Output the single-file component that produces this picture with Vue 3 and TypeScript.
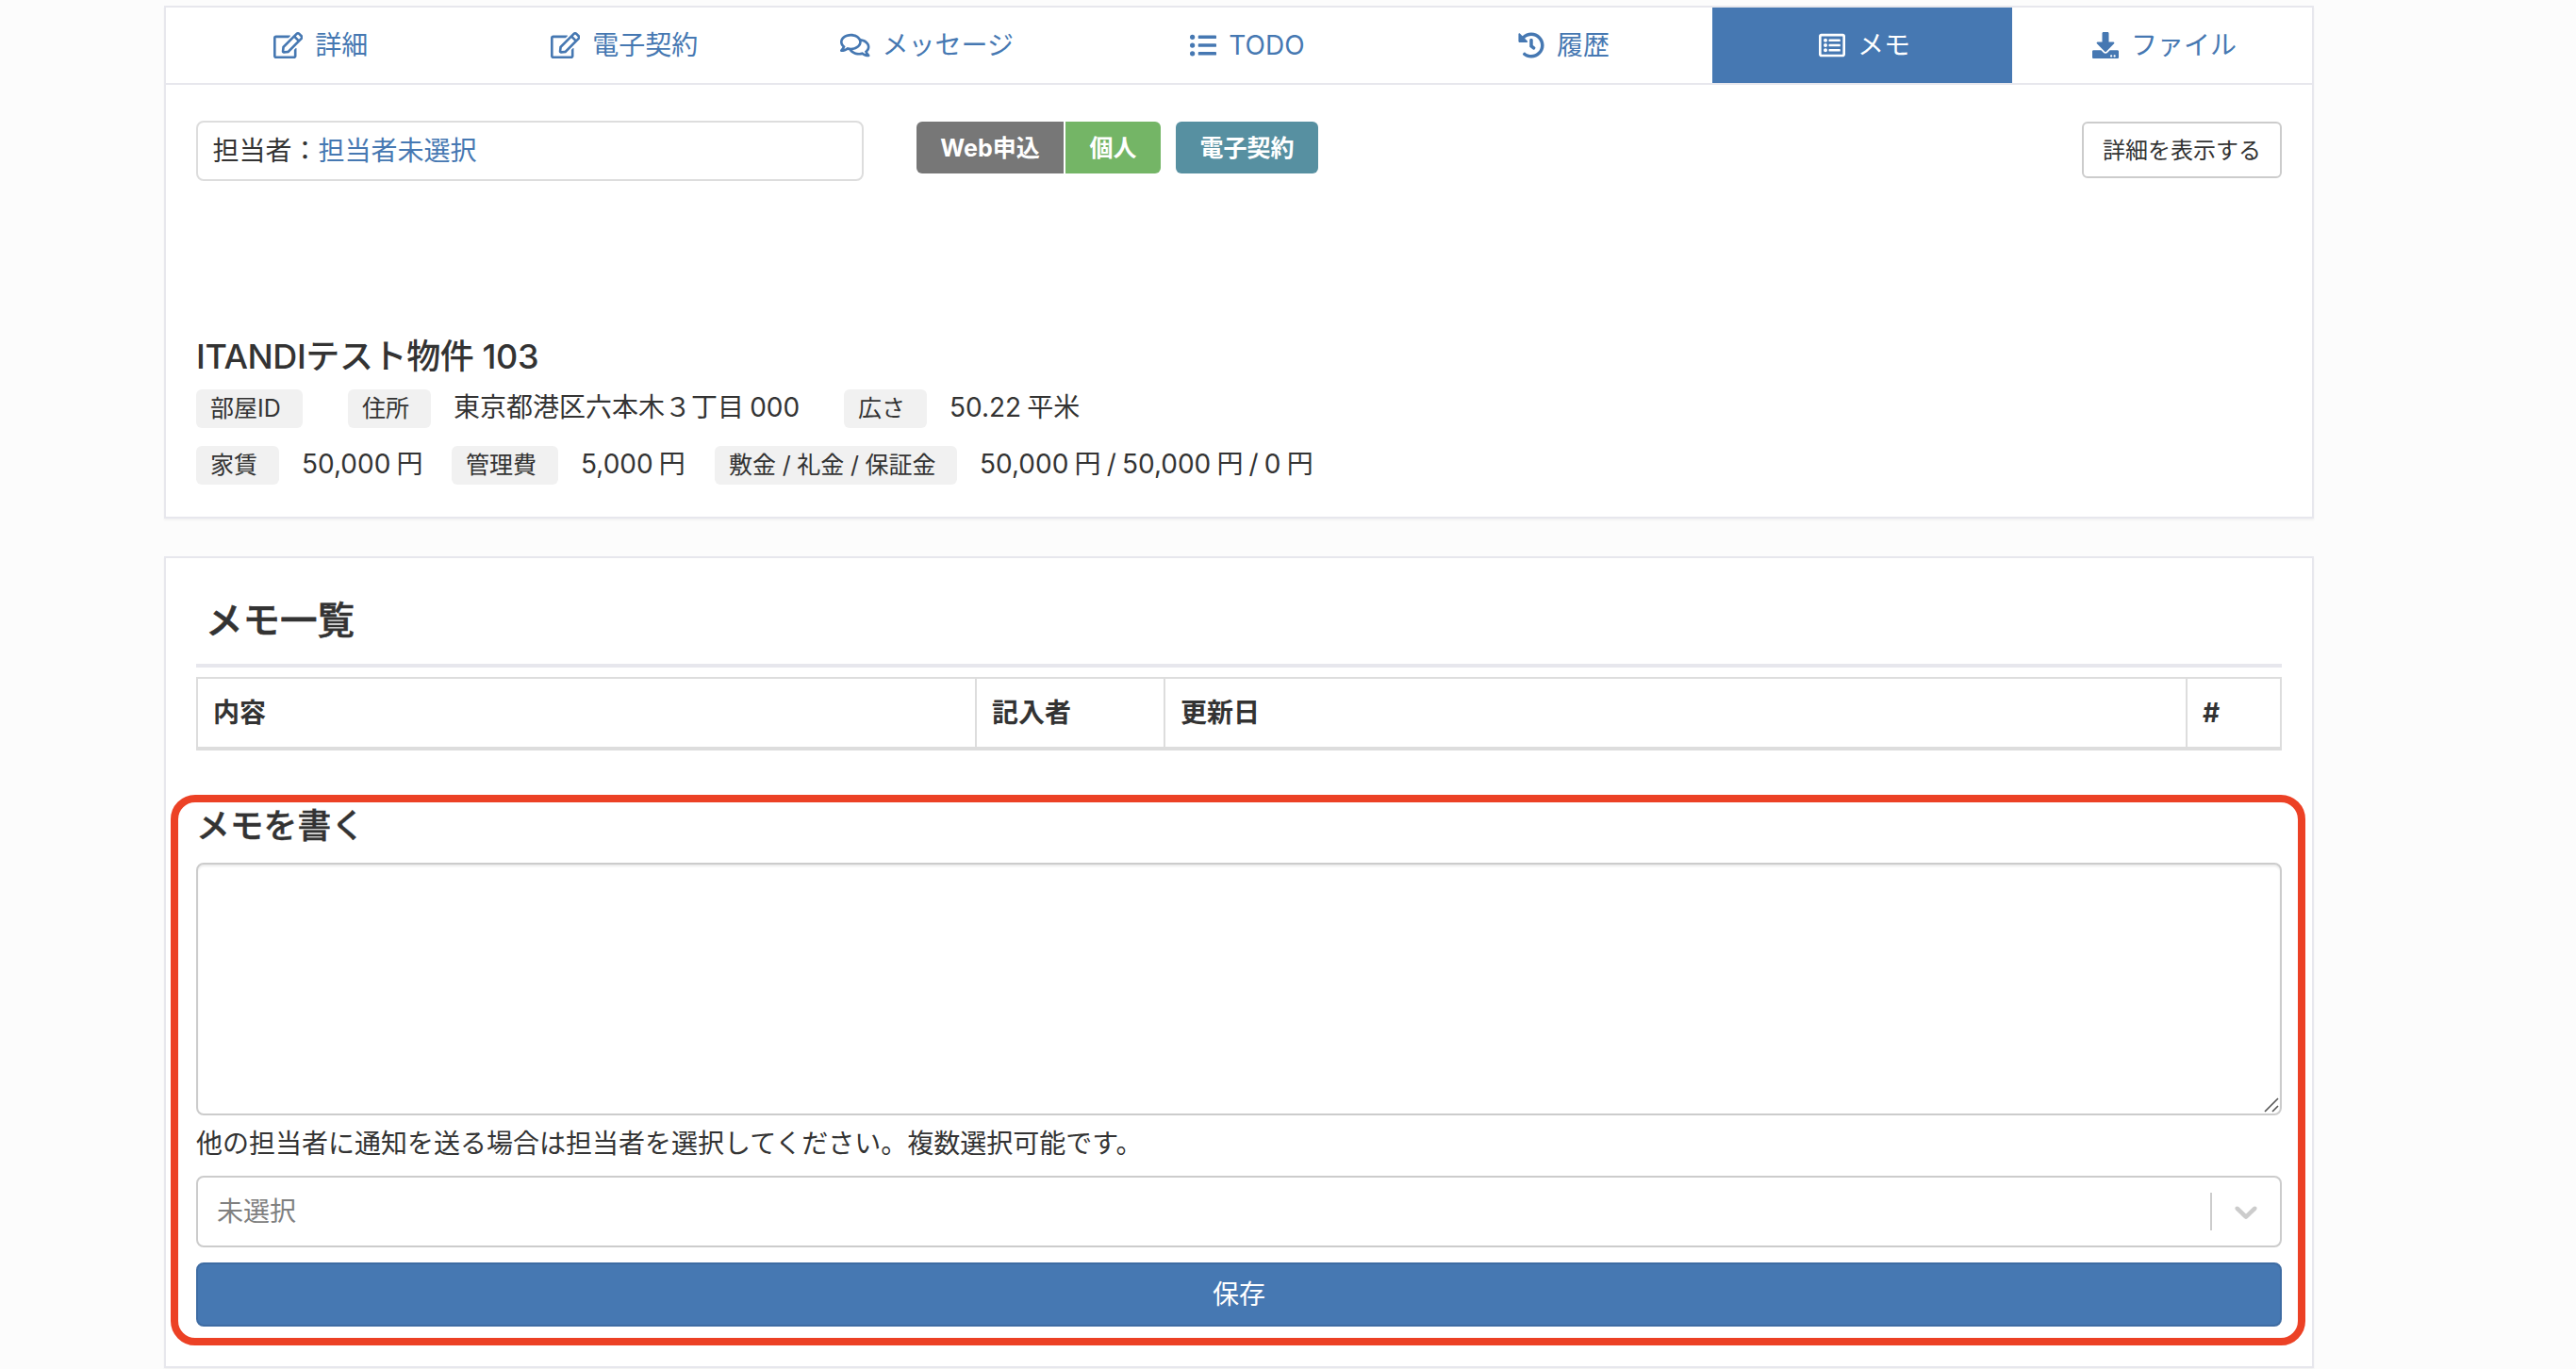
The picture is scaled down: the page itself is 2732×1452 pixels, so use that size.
<script setup lang="ts">
import { ref } from 'vue'

interface Tab {
  label: string
  width: number
  viewWidth: number
  path: string
}

const edit =
  'M402.3 344.9l32-32c5-5 13.7-1.5 13.7 5.7V464c0 26.5-21.5 48-48 48H48c-26.5 0-48-21.5-48-48V112c0-26.5 21.5-48 48-48h273.5c7.1 0 10.7 8.6 5.7 13.7l-32 32c-1.5 1.5-3.5 2.3-5.7 2.3H48v352h352V350.5c0-2.1.8-4.1 2.3-5.6zm156.6-201.8L296.3 405.7l-90.4 10c-26.2 2.9-48.5-19.2-45.6-45.6l10-90.4L432.9 17.1c22.9-22.9 59.9-22.9 82.7 0l43.2 43.2c22.9 22.9 22.9 60 .1 82.8zM460.1 174L402 115.9 216.2 301.8l-7.3 65.3 65.3-7.3L460.1 174zm64.8-79.7l-43.2-43.2c-4.1-4.1-10.8-4.1-14.8 0L436 82l58.1 58.1 30.9-30.9c4-4.2 4-10.8-.1-14.9z'
const comments =
  'M532 386.2c27.5-27.1 44-61.1 44-98.2 0-80-76.5-146.1-176.2-157.9C368.3 72.5 294.3 32 208 32 93.1 32 0 103.6 0 192c0 37 16.5 71 44 98.2-15.3 30.7-37.3 54.5-37.7 54.9-6.3 6.7-8.1 16.5-4.4 25 3.6 8.5 12 14 21.2 14 53.5 0 96.7-20.2 125.2-38.8 9.2 2.1 18.7 3.7 28.4 4.9C208.1 407.6 281.8 448 368 448c20.8 0 40.8-2.4 59.8-6.8C456.3 459.7 499.4 480 553 480c9.2 0 17.5-5.5 21.2-14 3.6-8.5 1.9-18.3-4.4-25-.4-.3-22.5-24.1-37.8-54.8zm-392.8-92.3L122.1 305c-14.1 9.1-28.5 16.3-43.1 21.4 2.7-4.7 5.4-9.7 8-14.8l15.5-31.1L77.7 256C64.2 242.6 48 220.7 48 192c0-60.7 73.3-112 160-112s160 51.3 160 112-73.3 112-160 112c-16.5 0-33-1.9-49-5.6l-19.8-4.5zM498.3 352l-24.7 24.4 15.5 31.1c2.6 5.1 5.3 10.1 8 14.8-14.6-5.1-29-12.3-43.1-21.4l-17.1-11.1-19.9 4.6c-16 3.7-32.5 5.6-49 5.6-54 0-102.2-20.1-131.3-49.7C338 339.5 416 272.9 416 192c0-3.4-.4-6.7-.7-10C479.7 196.5 528 238.8 528 288c0 28.7-16.2 50.6-29.7 64z'
const listUl =
  'M48 48a48 48 0 1 0 48 48 48 48 0 0 0-48-48zm0 160a48 48 0 1 0 48 48 48 48 0 0 0-48-48zm0 160a48 48 0 1 0 48 48 48 48 0 0 0-48-48zm448 16H176a16 16 0 0 0-16 16v32a16 16 0 0 0 16 16h320a16 16 0 0 0 16-16v-32a16 16 0 0 0-16-16zm0-320H176a16 16 0 0 0-16 16v32a16 16 0 0 0 16 16h320a16 16 0 0 0 16-16V80a16 16 0 0 0-16-16zm0 160H176a16 16 0 0 0-16 16v32a16 16 0 0 0 16 16h320a16 16 0 0 0 16-16v-32a16 16 0 0 0-16-16z'
const history =
  'M504 255.531c.253 136.64-111.18 248.372-247.82 248.468-59.015.042-113.223-20.53-155.822-54.911-11.077-8.94-11.905-25.541-1.839-35.607l11.267-11.267c8.609-8.609 22.353-9.551 31.891-1.984C173.062 425.135 212.781 440 256 440c101.705 0 184-82.311 184-184 0-101.705-82.311-184-184-184-48.814 0-93.149 18.969-126.068 49.932l50.754 50.754c10.08 10.08 2.941 27.314-11.313 27.314H24c-8.837 0-16-7.163-16-16V38.627c0-14.254 17.234-21.393 27.314-11.314l49.372 49.372C129.209 34.136 189.552 8 256 8c136.81 0 247.747 110.78 248 247.531zm-180.912 78.784l9.823-12.63c8.138-10.463 6.253-25.542-4.21-33.679L288 256.349V152c0-13.255-10.745-24-24-24h-16c-13.255 0-24 10.745-24 24v135.651l65.409 50.874c10.463 8.137 25.541 6.253 33.679-4.21z'
const listAlt =
  'M464 32H48C21.49 32 0 53.49 0 80v352c0 26.51 21.49 48 48 48h416c26.51 0 48-21.49 48-48V80c0-26.51-21.49-48-48-48zm-6 400H54a6 6 0 0 1-6-6V86a6 6 0 0 1 6-6h404a6 6 0 0 1 6 6v340a6 6 0 0 1-6 6zm-42-92v24c0 6.627-5.373 12-12 12H204c-6.627 0-12-5.373-12-12v-24c0-6.627 5.373-12 12-12h200c6.627 0 12 5.373 12 12zm0-96v24c0 6.627-5.373 12-12 12H204c-6.627 0-12-5.373-12-12v-24c0-6.627 5.373-12 12-12h200c6.627 0 12 5.373 12 12zm0-96v24c0 6.627-5.373 12-12 12H204c-6.627 0-12-5.373-12-12v-24c0-6.627 5.373-12 12-12h200c6.627 0 12 5.373 12 12zm-252 12c0 19.882-16.118 36-36 36s-36-16.118-36-36 16.118-36 36-36 36 16.118 36 36zm0 96c0 19.882-16.118 36-36 36s-36-16.118-36-36 16.118-36 36-36 36 16.118 36 36zm0 96c0 19.882-16.118 36-36 36s-36-16.118-36-36 16.118-36 36-36 36 16.118 36 36z'
const download =
  'M216 0h80c13.3 0 24 10.7 24 24v168h87.7c17.8 0 26.7 21.5 14.1 34.1L269.7 378.3c-7.5 7.5-19.8 7.5-27.3 0L90.1 226.1c-12.6-12.6-3.7-34.1 14.1-34.1H192V24c0-13.3 10.7-24 24-24zm296 376v112c0 13.3-10.7 24-24 24H24c-13.3 0-24-10.7-24-24V376c0-13.3 10.7-24 24-24h146.7l49 49c20.1 20.1 52.5 20.1 72.6 0l49-49H488c13.3 0 24 10.7 24 24zm-124 88c0-11-9-20-20-20s-20 9-20 20 9 20 20 20 20-9 20-20zm64 0c0-11-9-20-20-20s-20 9-20 20 9 20 20 20 20-9 20-20z'

const tabs: Tab[] = [
  { label: '詳細', width: 327, viewWidth: 576, path: edit },
  { label: '電子契約', width: 317, viewWidth: 576, path: edit },
  { label: 'メッセージ', width: 325, viewWidth: 576, path: comments },
  { label: 'TODO', width: 355, viewWidth: 512, path: listUl },
  { label: '履歴', width: 316, viewWidth: 512, path: history },
  { label: 'メモ', width: 318, viewWidth: 512, path: listAlt },
  { label: 'ファイル', width: 318, viewWidth: 512, path: download },
]

const activeTab = ref('メモ')
const memo = ref('')
</script>

<template>
  <main class="page">
    <section class="card">
      <nav class="tabs">
        <a
          v-for="tab in tabs"
          :key="tab.label"
          class="tab"
          :class="{ active: tab.label === activeTab }"
          :style="{ width: tab.width + 'px' }"
          @click="activeTab = tab.label"
        >
          <svg
            class="tab-icon"
            :width="(28 * tab.viewWidth) / 512"
            height="28"
            :viewBox="`0 0 ${tab.viewWidth} 512`"
          >
            <path fill="currentColor" :d="tab.path" />
          </svg>
          <span class="tab-label">{{ tab.label }}</span>
        </a>
      </nav>

      <div class="summary">
        <div class="person">担当者：<a class="link">担当者未選択</a></div>
        <div class="badge-group">
          <span class="badge gray">Web申込</span>
          <span class="badge green">個人</span>
        </div>
        <span class="badge teal">電子契約</span>
        <button class="detail-button">詳細を表示する</button>
      </div>

      <h2 class="property">ITANDIテスト物件 103</h2>
      <div class="facts">
        <span class="chip room">部屋ID</span>
        <span class="chip short">住所</span>
        <span class="value address">東京都港区六本木３丁目 000</span>
        <span class="chip short">広さ</span>
        <span class="value">50.22 平米</span>
      </div>
      <div class="facts second">
        <span class="chip short">家賃</span>
        <span class="value rent">50,000 円</span>
        <span class="chip">管理費</span>
        <span class="value fee">5,000 円</span>
        <span class="chip deposit">敷金 / 礼金 / 保証金</span>
        <span class="value">50,000 円 / 50,000 円 / 0 円</span>
      </div>
    </section>

    <section class="card memos">
      <h3 class="list-title">メモ一覧</h3>
      <div class="memo-table">
        <div class="th body-col">内容</div>
        <div class="th author-col">記入者</div>
        <div class="th date-col">更新日</div>
        <div class="th id-col">#</div>
      </div>

      <h4 class="write-title">メモを書く</h4>
      <div class="memo-field">
        <textarea v-model="memo" class="memo-input"></textarea>
        <svg class="grip" width="16" height="16" viewBox="0 0 16 16">
          <path d="M1 15L15 1M9 15L15 9" stroke="#555" stroke-width="1.6" fill="none" />
        </svg>
      </div>
      <p class="hint">他の担当者に通知を送る場合は担当者を選択してください。複数選択可能です。</p>
      <div class="select">
        <span class="placeholder">未選択</span>
        <span class="separator"></span>
        <svg class="chevron" width="40" height="40" viewBox="0 0 20 20">
          <path
            fill="#ccc"
            d="M4.516 7.548c0.436-0.446 1.043-0.481 1.576 0l3.908 3.747 3.908-3.747c0.533-0.481 1.141-0.446 1.574 0 0.436 0.445 0.408 1.197 0 1.615-0.406 0.418-4.695 4.502-4.695 4.502-0.217 0.223-0.502 0.335-0.787 0.335s-0.57-0.112-0.789-0.335c0 0-4.287-4.084-4.695-4.502s-0.436-1.17 0-1.615z"
          />
        </svg>
      </div>
      <button class="save">保存</button>
      <div class="highlight"></div>
    </section>
  </main>
</template>

<style>
body {
  background: #fcfcfc;
}
</style>

<style scoped>
* {
  box-sizing: border-box;
}
.page {
  height: 1452px;
  overflow: hidden;
  padding: 6px 278px 0 174px;
  background: #fcfcfc;
  color: #333;
  font-family: Inter, 'Noto Sans CJK JP', sans-serif;
  font-size: 28px;
  line-height: 40px;
}
.card {
  width: 2280px;
  height: 544px;
  background: #fff;
  border: 2px solid #e7e7ed;
  box-shadow: 0 2px 2px rgba(0, 0, 0, 0.04);
}
.tabs {
  display: flex;
  height: 82px;
  border-bottom: 2px solid #e7e7ed;
}
.tab {
  display: flex;
  align-items: center;
  justify-content: center;
  gap: 13px;
  padding: 0 0 2px 1px;
  color: #4678b2;
  white-space: nowrap;
}
.tab.active {
  background: #4678b2;
  color: #fff;
}
.tab:nth-child(n + 6) {
  padding-left: 5px;
}
.tab-icon {
  flex: none;
  margin-top: 2px;
}
.tab-label {
  padding-top: 2px;
}
.summary {
  display: flex;
  align-items: flex-start;
  padding: 38px 32px 0;
  height: 252px;
}
.person {
  width: 708px;
  height: 64px;
  margin-right: 56px;
  padding: 0 15.5px;
  border: 2px solid #ddd;
  border-radius: 8px;
  line-height: 61px;
}
.link {
  color: #4678b2;
}
.badge-group {
  display: flex;
  gap: 2px;
  margin: 1px 16px 0 0;
}
.badge {
  height: 55px;
  color: #fff;
  font-size: 25px;
  font-weight: 700;
  line-height: 56px;
  text-align: center;
  border-radius: 6px;
}
.gray {
  width: 156px;
  background: #777;
  border-radius: 6px 0 0 6px;
}
.green {
  width: 101px;
  background: #74b566;
  border-radius: 0 6px 6px 0;
}
.teal {
  width: 151px;
  margin-top: 1px;
  background: #5790a1;
}
.detail-button {
  width: 212px;
  height: 60px;
  margin: 1px 0 0 auto;
  padding: 0 0 3px;
  background: #fff;
  border: 2px solid #ccc;
  border-radius: 6px;
  color: #333;
  font: 24px Inter, 'Noto Sans CJK JP', sans-serif;
}
.property {
  margin: 0 0 0 32px;
  padding-top: 14px;
  height: 71px;
  font-size: 36px;
  font-weight: 500;
  line-height: 44px;
  letter-spacing: -0.4px;
}
.facts {
  display: flex;
  align-items: center;
  height: 41px;
  margin-left: 32px;
  white-space: nowrap;
}
.second {
  margin-top: 19px;
}
.chip {
  flex: none;
  width: 113px;
  height: 41px;
  margin-right: 24px;
  padding-left: 15px;
  background: #f1f1f1;
  border-radius: 6px;
  font-size: 25px;
  line-height: 40px;
  word-spacing: -0.4px;
}
.short {
  width: 88px;
}
.room {
  margin-right: 48px;
}
.value {
  height: 41px;
  line-height: 38px;
  word-spacing: -1.7px;
}
.address {
  width: 414px;
}
.rent {
  width: 159px;
}
.fee {
  width: 142px;
}
.deposit {
  width: 257px;
}
.memos {
  position: relative;
  height: 861px;
  margin-top: 40px;
  padding: 0 32px;
}
.list-title {
  height: 116px;
  margin: 0 0 10px;
  padding: 41px 0 0 10px;
  border-bottom: 4px solid #e7e7ed;
  font-size: 39.5px;
  font-weight: 500;
  line-height: 50px;
  -webkit-text-stroke: 0.6px #333;
}
.memo-table {
  display: flex;
  height: 78px;
  border: 2px solid #ddd;
  border-bottom-width: 4px;
}
.th {
  padding-left: 16px;
  border-right: 2px solid #ddd;
  font-weight: 700;
  line-height: 72px;
}
.body-col {
  width: 826px;
}
.author-col {
  width: 200px;
}
.date-col {
  flex: 1;
}
.id-col {
  width: 98px;
  border-right: 0;
}
.write-title {
  height: 119px;
  margin: 0;
  padding-top: 58px;
  font-size: 35.8px;
  font-weight: 500;
  line-height: 44px;
  -webkit-text-stroke: 0.4px #333;
}
.memo-field {
  position: relative;
  height: 268px;
}
.memo-input {
  display: block;
  width: 100%;
  height: 100%;
  padding: 12px 20px;
  background: #fff;
  border: 2px solid #ccc;
  border-radius: 8px;
  outline: none;
  box-shadow: inset 0 2px 2px rgba(0, 0, 0, 0.075);
  color: #333;
  font: inherit;
  resize: none;
}
.grip {
  position: absolute;
  right: 3px;
  bottom: 3px;
}
.hint {
  height: 64px;
  margin: 0;
  padding-top: 10px;
}
.select {
  display: flex;
  align-items: center;
  height: 76px;
  padding: 0 16px 0 20px;
  background: #fff;
  border: 2px solid #ccc;
  border-radius: 8px;
}
.placeholder {
  flex: 1;
  color: #808080;
}
.separator {
  width: 2px;
  height: 40px;
  margin-right: 16px;
  background: #ccc;
}
.save {
  display: block;
  width: 100%;
  height: 68px;
  margin-top: 16px;
  padding: 0 0 1px;
  background: #4678b2;
  border: 2px solid #3e6ca3;
  border-radius: 8px;
  color: #fff;
  font: inherit;
}
.highlight {
  position: absolute;
  left: 5px;
  top: 250.5px;
  width: 2264px;
  height: 584.5px;
  border: 8px solid #ec4125;
  border-radius: 26px;
  pointer-events: none;
}
</style>
